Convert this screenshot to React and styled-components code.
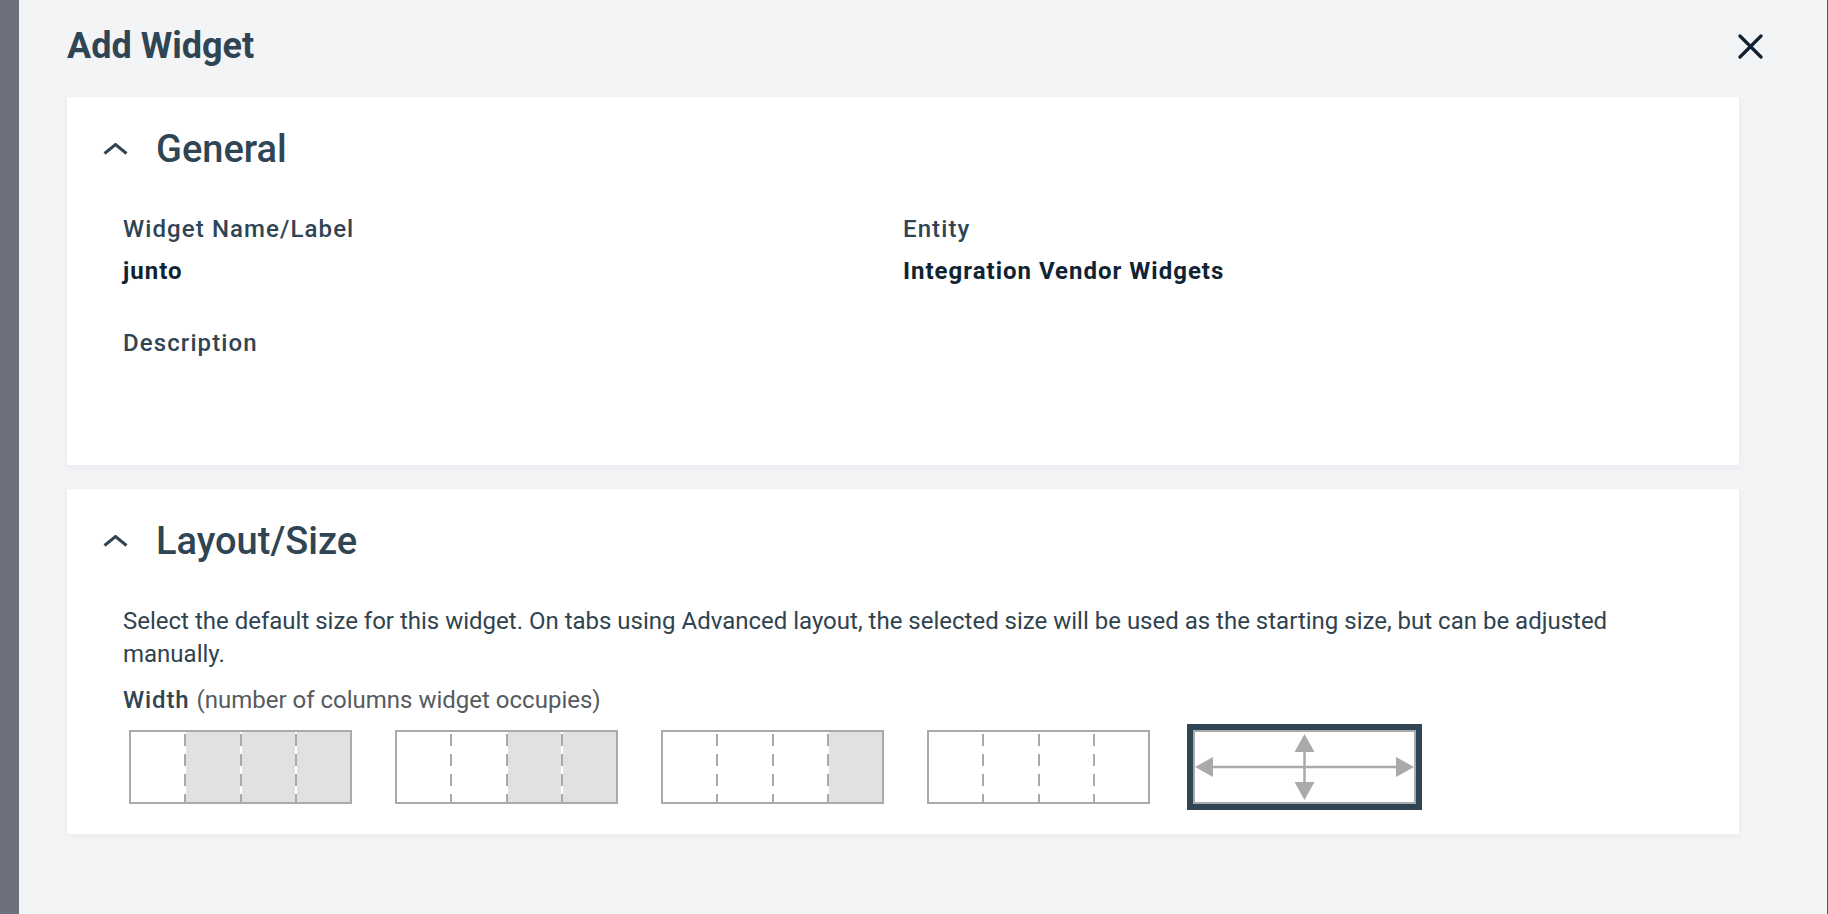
import styled, { createGlobalStyle } from 'styled-components';

const GlobalStyle = createGlobalStyle`
  html, body {
    margin: 0;
    padding: 0;
  }
  body {
    font-family: Roboto, "Liberation Sans", sans-serif;
    background: #6c707b;
    overflow: hidden;
  }
  * {
    box-sizing: border-box;
  }
`;

const Shell = styled.div`
  display: flex;
  height: 914px;
`;

const Backdrop = styled.div`
  width: 19px;
  flex-shrink: 0;
  background: #6c707b;
`;

const Drawer = styled.section`
  flex: 1;
  display: flex;
  flex-direction: column;
  background: #f3f4f6;
  border-right: 1px solid #50545c;
`;

const DrawerHeader = styled.header`
  height: 97px;
  padding: 0 64px 5px 48px;
  display: flex;
  align-items: center;
  justify-content: space-between;
`;

const Title = styled.h1`
  margin: 0;
  font-size: 36px;
  font-weight: 700;
  line-height: 1;
  color: #2f4553;
`;

const CloseButton = styled.button`
  width: 25px;
  height: 25px;
  padding: 0;
  border: 0;
  background: none;
  display: flex;
  cursor: pointer;
`;

const Content = styled.div`
  padding: 0 88px 0 48px;
  display: flex;
  flex-direction: column;
  gap: 24px;
`;

const Card = styled.div`
  background: #fff;
  box-shadow: 0 2px 8px rgba(30, 40, 50, 0.05);
`;

const CardHeader = styled.div`
  height: 104px;
  padding-left: 36px;
  display: flex;
  align-items: center;
  gap: 28px;
`;

const CardTitle = styled.h2`
  margin: 0;
  font-size: 38px;
  font-weight: 500;
  line-height: 1;
  color: #2f4553;
`;

const CardBody = styled.div`
  padding: ${(p) => p.$top}px 56px ${(p) => p.$bottom}px;
`;

const FieldGrid = styled.div`
  display: grid;
  grid-template-columns: 1fr 1fr;
  row-gap: 42px;
`;

const Field = styled.div`
  display: flex;
  flex-direction: column;
  gap: 12px;
`;

const Label = styled.div`
  font-size: 24px;
  font-weight: 500;
  line-height: 30px;
  letter-spacing: 1.1px;
  color: #2f4553;
`;

const Value = styled.div`
  min-height: 30px;
  font-size: 24px;
  font-weight: 700;
  line-height: 30px;
  letter-spacing: 1px;
  color: #0f2333;
`;

const Intro = styled.p`
  margin: 0;
  font-size: 24px;
  line-height: 33px;
  color: #30434f;
`;

const WidthLabel = styled.div`
  margin-top: 14px;
  line-height: 30px;
  font-size: 24px;
  font-weight: 500;
  letter-spacing: 0.9px;
  color: #2f4553;

  span {
    font-weight: 400;
    letter-spacing: 0;
    color: #555b60;
  }
`;

const Options = styled.div`
  margin-top: 9px;
  display: flex;
  gap: 31px;
`;

const Option = styled.button`
  padding: 0;
  background: none;
  border: 6px solid ${(p) => (p.$selected ? '#2f4553' : 'transparent')};
  cursor: pointer;
  display: flex;
`;

const Box = styled.div`
  width: 223px;
  height: 74px;
  border: 2px solid #aaa;
  background: #fff;
  display: flex;
`;

const Cell = styled.div`
  flex: 1;
  background: ${(p) => (p.$shaded ? '#e1e1e1' : '#fff')};
`;

const Divider = styled.div`
  width: 2px;
  background: repeating-linear-gradient(
    to bottom,
    transparent 0 2px,
    #aaa 2px 14px,
    transparent 14px 20px
  );
`;

function Chevron() {
  return (
    <svg width="25" height="12" viewBox="0 0 25 12">
      <polyline
        points="1.5,10.5 12.5,1.5 23.5,10.5"
        fill="none"
        stroke="#2f4553"
        strokeWidth="3"
      />
    </svg>
  );
}

function CloseIcon() {
  return (
    <svg width="25" height="25" viewBox="0 0 25 25">
      <path
        d="M2 2 L23 23 M23 2 L2 23"
        stroke="#0f2130"
        strokeWidth="3.2"
        strokeLinecap="round"
      />
    </svg>
  );
}

function ColumnsBox({ filled }) {
  const cells = [0, 1, 2, 3];
  return (
    <Box>
      {cells.map((i) => (
        <>
          {i > 0 && <Divider key={'d' + i} />}
          <Cell key={'c' + i} $shaded={i >= filled} />
        </>
      ))}
    </Box>
  );
}

function FreeBox() {
  return (
    <Box>
      <svg width="219" height="70" viewBox="0 0 219 70">
        <g fill="#aaa" stroke="#aaa" strokeWidth="2.5">
          <line x1="16" y1="35" x2="203" y2="35" />
          <line x1="109.5" y1="18" x2="109.5" y2="52" />
          <polygon stroke="none" points="0,35 18,25 18,45" />
          <polygon stroke="none" points="219,35 201,25 201,45" />
          <polygon stroke="none" points="109.5,2 99.5,20 119.5,20" />
          <polygon stroke="none" points="109.5,68 99.5,50 119.5,50" />
        </g>
      </svg>
    </Box>
  );
}

function Section({ title, top, bottom, children }) {
  return (
    <Card>
      <CardHeader>
        <Chevron />
        <CardTitle>{title}</CardTitle>
      </CardHeader>
      <CardBody $top={top} $bottom={bottom}>{children}</CardBody>
    </Card>
  );
}

export default function App() {
  const widths = [1, 2, 3, 4];
  return (
    <>
      <GlobalStyle />
      <Shell>
        <Backdrop />
        <Drawer>
          <DrawerHeader>
            <Title>Add Widget</Title>
            <CloseButton aria-label="Close">
              <CloseIcon />
            </CloseButton>
          </DrawerHeader>
          <Content>
            <Section title="General" top={13} bottom={65}>
              <FieldGrid>
                <Field>
                  <Label>Widget Name/Label</Label>
                  <Value>junto</Value>
                </Field>
                <Field>
                  <Label>Entity</Label>
                  <Value>Integration Vendor Widgets</Value>
                </Field>
                <Field>
                  <Label>Description</Label>
                  <Value />
                </Field>
              </FieldGrid>
            </Section>
            <Section title="Layout/Size" top={12} bottom={24}>
              <Intro>
                Select the default size for this widget. On tabs using Advanced layout, the selected
                size will be used as the starting size, but can be adjusted manually.
              </Intro>
              <WidthLabel>
                Width <span>(number of columns widget occupies)</span>
              </WidthLabel>
              <Options>
                {widths.map((w) => (
                  <Option key={w}>
                    <ColumnsBox filled={w} />
                  </Option>
                ))}
                <Option $selected>
                  <FreeBox />
                </Option>
              </Options>
            </Section>
          </Content>
        </Drawer>
      </Shell>
    </>
  );
}
